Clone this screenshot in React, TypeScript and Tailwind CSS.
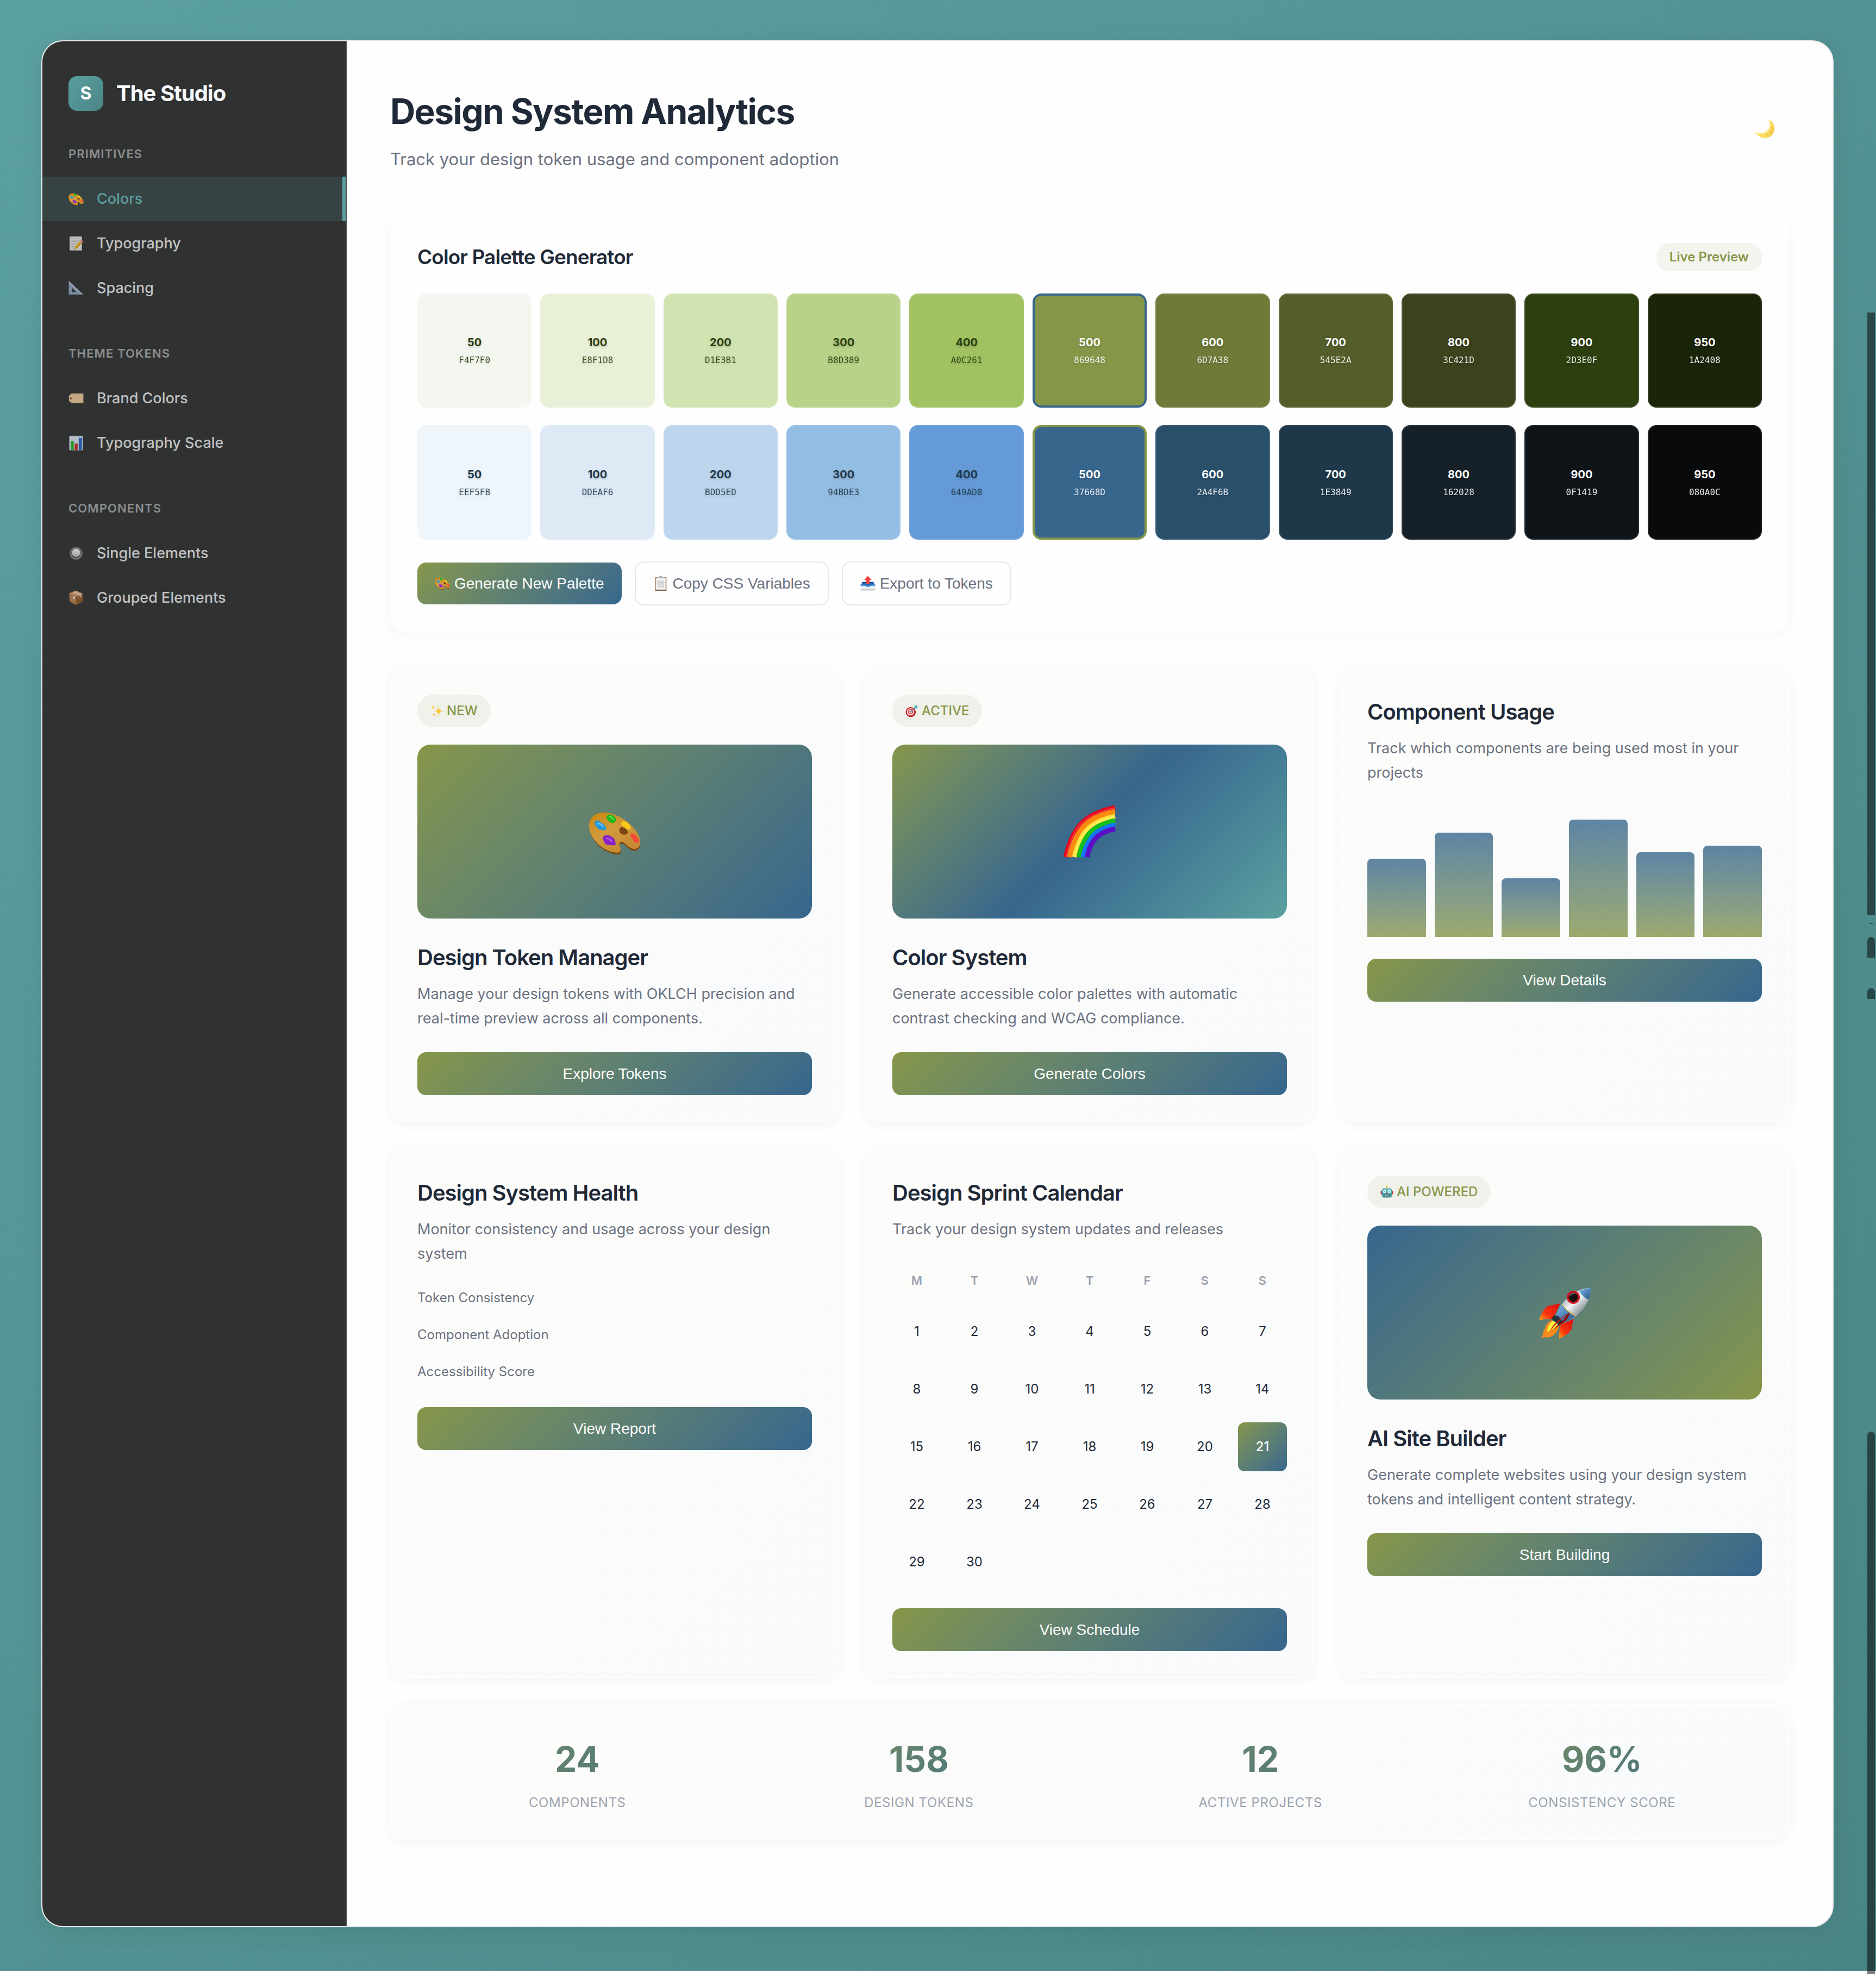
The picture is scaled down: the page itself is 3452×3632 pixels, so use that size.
import { useId } from "react";
import type { ReactNode } from "react";

type IconProps = { className?: string };

function Svg({ className, viewBox = "0 0 96 96", children }: IconProps & { viewBox?: string; children: ReactNode }) {
  return (
    <svg viewBox={viewBox} aria-hidden="true" className={className}>
      {children}
    </svg>
  );
}

function PaletteIcon({ className }: IconProps) {
  const id = useId();
  return (
    <Svg className={className} viewBox="0 -3 96 96">
      <defs>
        <linearGradient id={id} x1="0" y1="0" x2="0.6" y2="1">
          <stop offset="0" stopColor="#c8860d" />
          <stop offset="0.5" stopColor="#d29a3c" />
          <stop offset="1" stopColor="#c58a33" />
        </linearGradient>
      </defs>
      <path d="M28 13C10 13 1 25 2 40c2 23 27 46 52 47 8 0 5-8 3-14-2-6 5-8 9-4 6 6 11 11 19 11 7 0 11-7 10-15C92 42 58 13 28 13z" fill="#7a4510" />
      <path
        fillRule="evenodd"
        d="M28 10C9 10 0 22 1 37c2 23 27 46 52 47 8 0 6-8 4-14-2-6 4-8 9-4 6 6 11 11 19 11 7 0 11-7 10-15C92 39 58 10 28 10zm31 38c-4-4-3-10 2-11 5 0 10 4 11 8 1 6-8 8-13 3z"
        fill={`url(#${id})`}
      />
      <path d="M12 27c2-4 8-3 11 2 4 2 10 6 9 11-1 4-5 3-7 1-4 2-9-1-11-6-3-2-3-5-2-8z" fill="#1f9be0" />
      <path d="M16 31c4-2 9 2 11 5" stroke="#7fd0ff" strokeWidth="2" fill="none" />
      <path d="M34 16c2-4 9-3 13 1 5 3 4 11-1 12-6 1-9-3-11-6-2-2-3-4-1-7z" fill="#1fb51c" />
      <path d="M38 18c4-1 7 3 8 6" stroke="#74ec56" strokeWidth="2" fill="none" />
      <path d="M61 28c3-4 9-1 13 3 3 3 5 9 2 10-4 1-8-1-10-5-4-1-7-4-5-8z" fill="#f8c915" />
      <path d="M78 49c3-2 8 2 11 6 3 4 5 10 2 11-4 1-9-3-10-8-3-2-5-6-3-9z" fill="#f4483c" />
      <path d="M27 55c3-5 11-4 16 0 6 3 5 7 7 12 1 5-9 3-12 3-6 0-9-4-10-8-2-2-3-5-1-7z" fill="#8b22c4" />
      <path d="M32 58c5-1 9 2 11 6" stroke="#b86ae8" strokeWidth="2" fill="none" />
    </Svg>
  );
}

function MemoIcon({ className }: IconProps) {
  return (
    <Svg className={className}>
      <rect x="8" y="4" width="76" height="88" rx="2" fill="#e4e4e2" stroke="#a5a5a3" strokeWidth="3" />
      <g stroke="#9a9a9a" strokeWidth="3" strokeDasharray="9 3 5 2">
        <path d="M18 17h50M18 27h56M18 37h46M18 47h40M18 57h30M18 67h22M18 77h18" />
      </g>
      <path d="M74 32l14 9-38 40-17 7 5-18z" fill="#f2c022" />
      <path d="M81 36l7 5-38 40-8-5z" fill="#d99a12" />
      <path d="M74 32l6-6c6-1 11 4 10 9l-4 8z" fill="#ee7d86" />
      <path d="M70 36l14 10 3-4-13-10z" fill="#b9bcc0" />
      <path d="M38 70l-5 18 17-7z" fill="#ecd3a4" />
      <path d="M35 80l-2 8 7-3z" fill="#333333" />
    </Svg>
  );
}

function RulerIcon({ className }: IconProps) {
  return (
    <Svg className={className}>
      <path fillRule="evenodd" d="M2 3l92 88H2zM22 46v27h28z" fill="#8fa3bd" />
      <path d="M2 3l92 88h-8L2 12z" fill="#b9c8da" />
      <path d="M2 86h88l4 5H2z" fill="#65788f" />
      <path d="M22 46v27h28" fill="none" stroke="#5d6f86" strokeWidth="3" />
    </Svg>
  );
}

function TagIcon({ className }: IconProps) {
  return (
    <Svg className={className}>
      <path d="M20 17h74v62H20L3 64V32z" fill="#e9c698" />
      <path d="M94 75v4H20L3 64v-4l18 15z" fill="#b08a5c" />
      <circle cx="15" cy="48" r="7" fill="#a87f50" />
      <circle cx="15" cy="48" r="4" fill="#3b2a1c" />
    </Svg>
  );
}

function ChartIcon({ className }: IconProps) {
  return (
    <Svg className={className}>
      <rect x="6" y="4" width="84" height="89" fill="#dbe7f2" />
      <path d="M6 25h84M6 46h84M6 67h84M34 4v89M62 4v89" stroke="#b5c6d6" strokeWidth="2" />
      <rect x="14" y="36" width="19" height="57" fill="#28b22e" />
      <rect x="39" y="52" width="19" height="41" fill="#c9252b" />
      <rect x="65" y="16" width="19" height="77" fill="#1d62bd" />
      <rect x="6" y="4" width="84" height="89" fill="none" stroke="#8d9aa6" strokeWidth="3" />
    </Svg>
  );
}

function RadioIcon({ className }: IconProps) {
  const id = useId();
  return (
    <Svg className={className}>
      <defs>
        <linearGradient id={id} x1="0" y1="0" x2="0" y2="1">
          <stop offset="0" stopColor="#f7f7f7" />
          <stop offset="1" stopColor="#bdbdbd" />
        </linearGradient>
      </defs>
      <circle cx="48" cy="48" r="41" fill="#6a6b6b" />
      <circle cx="48" cy="49" r="37" fill="#858686" />
      <circle cx="48" cy="48" r="30" fill="#4b4c4c" />
      <circle cx="48" cy="45" r="26" fill={`url(#${id})`} />
    </Svg>
  );
}

function PackageIcon({ className }: IconProps) {
  return (
    <Svg className={className}>
      <path d="M48 2l44 19-43 20L4 20z" fill="#d39b6c" />
      <path d="M4 20l45 21v53L7 71z" fill="#b97c4c" />
      <path d="M92 21L49 41v53l40-22z" fill="#94602f" />
      <path d="M26 11l44 20 11-5-44-19z" fill="#ead5bd" />
      <path d="M70 31l11-5v14l-11 5z" fill="#d3bda4" />
      <path d="M28 37l13 6v14l-13-6z" fill="#f0ebe4" />
      <path d="M66 68l11-6v9l-11 6z" fill="#6f431d" />
    </Svg>
  );
}

function MoonIcon({ className }: IconProps) {
  const id = useId();
  return (
    <Svg className={className}>
      <defs>
        <linearGradient id={id} x1="0" y1="0.6" x2="1" y2="1">
          <stop offset="0" stopColor="#fdd95b" />
          <stop offset="0.6" stopColor="#fbdc63" />
          <stop offset="1" stopColor="#eebb33" />
        </linearGradient>
      </defs>
      <path d="M64 2c18 8 31 24 30 45-1 27-22 46-47 46C25 93 8 81 1 63c18 8 41 8 56-5 16-14 18-38 7-56z" fill={`url(#${id})`} />
      <path d="M66 6c10 18 8 40-7 54C44 73 22 75 5 67" fill="none" stroke="#fff0a6" strokeWidth="3" />
      <circle cx="74" cy="62" r="4" fill="#edc041" />
      <circle cx="56" cy="77" r="5" fill="#edc041" />
      <circle cx="80" cy="40" r="3" fill="#edc041" />
    </Svg>
  );
}

function ClipboardIcon({ className }: IconProps) {
  return (
    <Svg className={className}>
      <rect x="12" y="9" width="72" height="86" rx="5" fill="#b08d68" />
      <rect x="12" y="90" width="72" height="5" rx="2" fill="#6e5238" />
      <rect x="18" y="15" width="60" height="73" fill="#f6f6f6" />
      <rect x="26" y="30" width="44" height="48" fill="#dcdcdc" />
      <path d="M26 36h44M26 44h44M26 52h44M26 60h44M26 68h44" stroke="#c6c6c6" strokeWidth="2" />
      <path d="M28 18v-6c0-3 8-2 10-5 1-8 19-8 20 0 2 3 10 2 10 5v6z" fill="#bcc3cb" />
      <circle cx="48" cy="8" r="4" fill="#7c858f" />
    </Svg>
  );
}

function OutboxIcon({ className }: IconProps) {
  return (
    <Svg className={className}>
      <path d="M14 40h68l12 24H2z" fill="#2166b5" />
      <path d="M14 40h68l4 8H10z" fill="#164d8f" />
      <path d="M2 56h27c3 14 10 18 19 18s16-4 19-18h27v9l-1 2H3l-1-2z" fill="#2f8ae0" />
      <path d="M2 64h27c4 12 10 15 19 15s15-3 19-15h27v24c0 4-2 6-6 6H8c-4 0-6-2-6-6z" fill="#ebedf0" />
      <path d="M2 86h92v2c0 4-2 6-6 6H8c-4 0-6-2-6-6z" fill="#c9ced5" />
      <path d="M48 2l23 25H58v27H38V27H25z" fill="#f0413f" />
    </Svg>
  );
}

function SparklesIcon({ className }: IconProps) {
  return (
    <Svg className={className}>
      <path d="M60 12c3 26 8 33 32 38-24 5-29 12-32 40-3-28-8-35-32-40 24-5 29-12 32-38z" fill="#fbc93a" />
      <path d="M19 2c2 13 5 17 16 20-11 3-14 7-16 20-2-13-5-17-16-20 11-3 14-7 16-20z" fill="#fbd15a" />
      <path d="M27 60c1 11 4 14 14 16-10 3-13 6-14 18-2-12-4-15-14-18 10-2 12-5 14-16z" fill="#fbbf6a" />
    </Svg>
  );
}

function DartIcon({ className }: IconProps) {
  return (
    <Svg className={className}>
      <ellipse cx="40" cy="58" rx="36" ry="35" fill="#8d1420" />
      <ellipse cx="38" cy="55" rx="36" ry="35" fill="#d7262f" />
      <ellipse cx="38" cy="55" rx="27" ry="26" fill="#f5f0ee" />
      <ellipse cx="38" cy="55" rx="20" ry="19" fill="#d7262f" />
      <ellipse cx="38" cy="55" rx="13" ry="12" fill="#f5f0ee" />
      <ellipse cx="38" cy="55" rx="7" ry="6" fill="#d7262f" />
      <path d="M38 55l34-30" stroke="#397f8c" strokeWidth="5" />
      <path d="M64 30l4-17 13-10 2 11 11 3-12 13z" fill="#48b4c1" />
    </Svg>
  );
}

function RainbowIcon({ className }: IconProps) {
  const bands: [number, string][] = [
    [91, "#e3061b"],
    [84, "#fb8a10"],
    [75, "#ffdf35"],
    [67, "#14bf1c"],
    [59, "#1478f5"],
    [52, "#5a0fc4"],
  ];
  return (
    <Svg className={className}>
      {bands.map(([r, color]) => (
        <path key={r} d={`M${95 - r} 95Q${95 - r * 0.9} ${95 - r * 0.45} ${95 - r * 0.68} ${95 - r * 0.68}T95 ${95 - r}`} fill="none" stroke={color} strokeWidth="9" />
      ))}
      <path d="M5 95Q15 50 34 32T95 4" fill="none" stroke="#ff5560" strokeWidth="2" opacity="0.7" />
      <path d="M20 95Q28 60 44 44T95 20" fill="none" stroke="#fff36b" strokeWidth="3" opacity="0.8" />
    </Svg>
  );
}

function RobotIcon({ className }: IconProps) {
  return (
    <Svg className={className}>
      <rect x="44" y="6" width="8" height="18" fill="#f0a72a" />
      <circle cx="48" cy="8" r="7" fill="#f4c63a" />
      <rect x="2" y="42" width="12" height="24" rx="4" fill="#c8333a" />
      <rect x="82" y="42" width="12" height="24" rx="4" fill="#c8333a" />
      <path d="M26 22h44c12 0 16 8 16 20v30c0 12-6 18-16 18H26c-10 0-16-6-16-18V42c0-12 4-20 16-20z" fill="#4d9fa6" />
      <path d="M26 22h44c12 0 16 8 16 16H10c0-8 4-16 16-16z" fill="#78c3c6" />
      <circle cx="31" cy="46" r="11" fill="#e9fbff" />
      <circle cx="65" cy="46" r="11" fill="#e9fbff" />
      <circle cx="31" cy="46" r="5" fill="#2bbbe3" />
      <circle cx="65" cy="46" r="5" fill="#2bbbe3" />
      <path d="M48 52l6 10H42z" fill="#d23c42" />
      <rect x="26" y="68" width="44" height="13" rx="4" fill="#2d4c52" />
      <path d="M34 74h6M45 74h6M56 74h6" stroke="#e8eef0" strokeWidth="5" />
    </Svg>
  );
}

function RocketIcon({ className }: IconProps) {
  const id = useId();
  return (
    <Svg className={className}>
      <defs>
        <linearGradient id={`${id}b`} x1="0.2" y1="0.2" x2="0.8" y2="0.8">
          <stop offset="0" stopColor="#8fa0ac" />
          <stop offset="0.45" stopColor="#f2f3f4" />
          <stop offset="1" stopColor="#62707b" />
        </linearGradient>
        <linearGradient id={`${id}n`} x1="0" y1="0" x2="1" y2="1">
          <stop offset="0" stopColor="#7eb8ea" />
          <stop offset="1" stopColor="#245389" />
        </linearGradient>
        <linearGradient id={`${id}f`} x1="1" y1="0" x2="0" y2="1">
          <stop offset="0" stopColor="#d80f10" />
          <stop offset="0.65" stopColor="#f9340d" />
          <stop offset="1" stopColor="#ffa51e" />
        </linearGradient>
      </defs>
      <path d="M40 31L17 36C9 42 4 52 1 62c9-2 17-3 25-1z" fill={`url(#${id}f)`} />
      <path d="M64 60l-3 18c-5 8-13 14-23 18 0-12 0-19 4-27z" fill={`url(#${id}f)`} />
      <path d="M24 62c-8 4-12 12-13 18l-3 4 1 3-4 8 9-2 4 1c9-2 17-10 20-20z" fill="#f98a1c" />
      <path d="M27 63c-7 4-11 12-11 20 7-1 15-6 19-14z" fill="#ffee3f" />
      <path d="M96 3C72 2 42 22 32 55l14 12C76 57 97 28 96 3z" fill={`url(#${id}b)`} />
      <path d="M96 3C90 3 82 5 75 8c4 8 11 14 17 16 3-7 4-14 4-21z" fill={`url(#${id}n)`} />
      <path d="M43 32c-5 7-9 15-11 23l14 12c8-3 15-7 22-13C59 50 48 41 43 32z" fill={`url(#${id}n)`} />
      <path d="M43 32c5 9 16 18 25 22" fill="none" stroke="#ddb93c" strokeWidth="1.5" />
      <path d="M29 53l8 2 7 10-5 6-16-12z" fill="#273138" />
      <path d="M57 48c-10 8-24 18-37 36 6-14 18-25 37-36z" fill="#c31414" />
      <path d="M57 48c0 12-12 20-37 36 10-7 26-20 32-32z" fill="#8d0b0b" />
      <circle cx="64" cy="20" r="12" fill="#d41620" />
      <circle cx="64" cy="20" r="8.5" fill="#171113" />
      <path d="M58 18c1-4 5-6 9-5" stroke="#776c70" strokeWidth="2" fill="none" />
    </Svg>
  );
}

type Icon = (props: IconProps) => ReactNode;

const sections: { title: string; items: { label: string; icon: Icon; active?: boolean }[] }[] = [
  {
    title: "Primitives",
    items: [
      { label: "Colors", icon: PaletteIcon, active: true },
      { label: "Typography", icon: MemoIcon },
      { label: "Spacing", icon: RulerIcon },
    ],
  },
  {
    title: "Theme Tokens",
    items: [
      { label: "Brand Colors", icon: TagIcon },
      { label: "Typography Scale", icon: ChartIcon },
    ],
  },
  {
    title: "Components",
    items: [
      { label: "Single Elements", icon: RadioIcon },
      { label: "Grouped Elements", icon: PackageIcon },
    ],
  },
];

const steps = [50, 100, 200, 300, 400, 500, 600, 700, 800, 900, 950];
const green = ["F4F7F0", "E8F1D8", "D1E3B1", "B8D389", "A0C261", "869648", "6D7A38", "545E2A", "3C421D", "2D3E0F", "1A2408"];
const blue = ["EEF5FB", "DDEAF6", "BDD5ED", "94BDE3", "649AD8", "37668D", "2A4F6B", "1E3849", "162028", "0F1419", "080A0C"];

function Sidebar() {
  return (
    <aside className="w-[560px] shrink-0 border-r-2 border-[#4b4d4d] bg-[#303232] pt-16">
      <div className="mb-[62px] flex items-center gap-6 px-12">
        <div className="flex size-16 items-center justify-center rounded-2xl bg-linear-135 from-[#5b9fa0] to-[#4a8585] text-[32px] leading-none font-bold text-white">S</div>
        <span className="text-[40px] leading-[64px] font-bold tracking-tight text-[#f9fafb]">The Studio</span>
      </div>
      <nav>
        {sections.map((section) => (
          <div key={section.title} className="mb-[62px]">
            <h2 className="mb-6 px-12 text-[22px] leading-[35px] font-semibold tracking-wider text-[#8d8f8f] uppercase">{section.title}</h2>
            {section.items.map(({ label, icon: ItemIcon, active }) => (
              <a
                key={label}
                href="#"
                className={
                  active
                    ? "flex items-center gap-6 border-r-6 border-[#5b9fa0] bg-[#374342] px-12 py-5 text-[27px] leading-[42px] font-medium text-[#5b9fa0]"
                    : "flex items-center gap-6 px-12 py-5 text-[27px] leading-[42px] font-medium text-[#c1c2c2]"
                }
              >
                <ItemIcon className={active ? "size-7" : "size-7 opacity-80"} />
                {label}
              </a>
            ))}
          </div>
        ))}
      </nav>
    </aside>
  );
}

function SwatchRow({ name, colors, ink, ring }: { name: string; colors: string[]; ink: string; ring: string }) {
  return (
    <div className="grid grid-cols-11 gap-4">
      {colors.map((hex, i) => (
        <button
          key={hex}
          type="button"
          aria-label={`${name} ${steps[i]}, ${hex}`}
          className={`flex aspect-square flex-col items-center justify-center gap-1 rounded-2xl [text-shadow:0_2px_4px_rgba(0,0,0,0.2)] ${
            i < 5 ? ink : "text-white"
          } ${i === 5 ? ring : "border-2 border-white/10"}`}
          style={{ backgroundColor: `#${hex}` }}
        >
          <span className="text-[20px] leading-8 font-bold">{steps[i]}</span>
          <span className="font-['DejaVu_Sans_Mono',monospace] text-[16px] leading-[26px] opacity-90">{hex}</span>
        </button>
      ))}
    </div>
  );
}

function OutlineButton({ icon: ButtonIcon, children }: { icon: Icon; children: ReactNode }) {
  return (
    <button type="button" className="flex items-center gap-2 rounded-2xl border-2 border-[#e5e7eb] px-8 py-[22px] font-['Liberation_Sans',sans-serif] text-[28px] leading-[33px] text-[#6b7280]">
      <ButtonIcon className="size-7" />
      {children}
    </button>
  );
}

function PalettePanel() {
  return (
    <section className="mb-16 rounded-[32px] border-2 border-transparent p-12 shadow-[0_4px_24px_rgba(0,0,0,0.04)]">
      <div className="mb-10 flex h-[54px] items-center justify-between">
        <h2 className="text-[37px] leading-[54px] font-semibold tracking-tight text-[#1f2937]">Color Palette Generator</h2>
        <span className="rounded-[24px] bg-[#f3f4ee] px-6 text-[24px] leading-[52px] font-semibold text-[#869648]">Live Preview</span>
      </div>
      <div className="mb-10 flex flex-col gap-8">
        <SwatchRow name="Green" colors={green} ink="text-[#2d3e0f]" ring="border-4 border-[#37668d]" />
        <SwatchRow name="Blue" colors={blue} ink="text-[#1e3849]" ring="border-4 border-[#869648]" />
      </div>
      <div className="flex flex-wrap items-center gap-6">
        <button type="button" className="flex items-center gap-2 rounded-2xl bg-linear-135 from-[#869648] to-[#37668d] px-8 py-[22px] font-['Liberation_Sans',sans-serif] text-[28px] leading-[33px] text-white">
          <PaletteIcon className="size-7" />
          Generate New Palette
        </button>
        <OutlineButton icon={ClipboardIcon}>Copy CSS Variables</OutlineButton>
        <OutlineButton icon={OutboxIcon}>Export to Tokens</OutlineButton>
      </div>
    </section>
  );
}

const cardClass =
  "rounded-[32px] border-2 border-white/80 bg-linear-135 from-[#fcfcfa] via-[#fbfbfb] to-[#f8fafc] p-12 shadow-[0_4px_24px_rgba(0,0,0,0.05)]";

function Card({ title, text, action, badge, badgeIcon: BadgeIcon, hero, children }: {
  title: string;
  text: string;
  action: string;
  badge?: string;
  badgeIcon?: Icon;
  hero?: ReactNode;
  children?: ReactNode;
}) {
  return (
    <article className={cardClass}>
      {badge && BadgeIcon && (
        <span className="mb-8 flex w-fit items-center gap-1.5 rounded-[30px] bg-[#f0f1ea] px-6 text-[24px] leading-[60px] font-medium text-[#869648]">
          <BadgeIcon className="size-6" />
          {badge}
        </span>
      )}
      {hero}
      <h3 className="mb-3 text-[40px] leading-[64px] font-semibold tracking-tight text-[#1f2937]">{title}</h3>
      <p className="mb-10 text-[27px] leading-[45px] text-[#6b7280]">{text}</p>
      {children}
      <button type="button" className="block w-full rounded-2xl bg-linear-135 from-[#869648] to-[#37668d] py-6 font-['Liberation_Sans',sans-serif] text-[28px] leading-[31px] text-white">
        {action}
      </button>
    </article>
  );
}

function UsageChart() {
  const bars = [60, 80, 45, 90, 65, 70];
  return (
    <div className="mb-10 flex h-60 items-end gap-4" role="img" aria-label="Component usage">
      {bars.map((value, i) => (
        <div key={i} className="flex-1 rounded-t-lg bg-linear-to-t from-[#869648] to-[#37668d] opacity-80" style={{ height: `${value}%` }} />
      ))}
    </div>
  );
}

function HealthList() {
  return (
    <ul className="mb-[46px] flex flex-col gap-[30px] text-[24px] leading-[38px] text-[#6b7280]">
      <li>Token Consistency</li>
      <li>Component Adoption</li>
      <li>Accessibility Score</li>
    </ul>
  );
}

function Calendar() {
  const weeks = [0, 1, 2, 3, 4].map((w) => [1, 2, 3, 4, 5, 6, 7].map((d) => w * 7 + d).filter((d) => d <= 30));
  return (
    <table className="mb-10 block">
      <thead className="mb-4 block">
        <tr className="grid grid-cols-7 gap-4">
          {["M", "T", "W", "T", "F", "S", "S"].map((d, i) => (
            <th key={i} scope="col" className="text-[22px] leading-[65px] font-semibold text-[#9ca3af]">
              {d}
            </th>
          ))}
        </tr>
      </thead>
      <tbody className="flex flex-col gap-4">
        {weeks.map((week) => (
          <tr key={week[0]} className="grid grid-cols-7 gap-4">
            {week.map((d) => (
              <td
                key={d}
                className={
                  d === 21
                    ? "flex aspect-square items-center justify-center rounded-xl bg-linear-135 from-[#869648] to-[#37668d] text-[24px] font-medium text-white"
                    : "flex aspect-square items-center justify-center text-[24px] text-[#1f2937]"
                }
              >
                {d}
              </td>
            ))}
          </tr>
        ))}
      </tbody>
    </table>
  );
}

function Stats() {
  const stats = [
    ["24", "Components"],
    ["158", "Design Tokens"],
    ["12", "Active Projects"],
    ["96%", "Consistency Score"],
  ];
  return (
    <dl className={`mt-12 grid grid-cols-4 gap-10 text-center ${cardClass}`}>
      {stats.map(([value, label]) => (
        <div key={label} className="flex flex-col-reverse gap-2.5">
          <dt className="text-[24px] leading-[38px] tracking-wide text-[#9ca3af] uppercase">{label}</dt>
          <dd className="bg-linear-135 from-[#869648] to-[#37668d] bg-clip-text text-[64px] leading-[102px] font-bold text-transparent">{value}</dd>
        </div>
      ))}
    </dl>
  );
}

const heroClass = "mb-10 flex h-80 items-center justify-center rounded-3xl bg-linear-135";

export default function App() {
  return (
    <div className="relative min-h-screen bg-white font-['Inter',sans-serif]">
      <div className="bg-linear-135 from-[#5ba0a0] to-[#4a8585] pt-[74px] pr-[78px] pb-20 pl-[76px]">
        <div className="flex overflow-hidden rounded-[40px] border-2 border-[#e5e7eb] bg-[#fefefe] shadow-[0_8px_40px_rgba(0,0,0,0.08)]">
          <Sidebar />
          <main className="min-w-0 flex-1 px-20 pt-20 pb-[158px]">
            <header className="mb-[78px] flex items-center justify-between">
              <div>
                <h1 className="mb-3.5 text-[64px] leading-[98px] font-bold tracking-tight text-[#1f2937]">Design System Analytics</h1>
                <p className="text-[31px] leading-[50px] text-[#6b7280]">Track your design token usage and component adoption</p>
              </div>
              <button type="button" aria-label="Switch to dark mode" className="flex size-[88px] items-center justify-center">
                <MoonIcon className="size-9" />
              </button>
            </header>
            <PalettePanel />
            <div className="grid grid-cols-3 gap-12">
              <Card
                badge="NEW"
                badgeIcon={SparklesIcon}
                hero={
                  <div className={`${heroClass} from-[#869648] to-[#37668d]`}>
                    <PaletteIcon className="size-24" />
                  </div>
                }
                title="Design Token Manager"
                text="Manage your design tokens with OKLCH precision and real-time preview across all components."
                action="Explore Tokens"
              />
              <Card
                badge="ACTIVE"
                badgeIcon={DartIcon}
                hero={
                  <div className={`${heroClass} from-[#869648] via-[#37668d] to-[#5ba0a0]`}>
                    <RainbowIcon className="size-24" />
                  </div>
                }
                title="Color System"
                text="Generate accessible color palettes with automatic contrast checking and WCAG compliance."
                action="Generate Colors"
              />
              <Card title="Component Usage" text="Track which components are being used most in your projects" action="View Details">
                <UsageChart />
              </Card>
              <Card title="Design System Health" text="Monitor consistency and usage across your design system" action="View Report">
                <HealthList />
              </Card>
              <Card title="Design Sprint Calendar" text="Track your design system updates and releases" action="View Schedule">
                <Calendar />
              </Card>
              <Card
                badge="AI POWERED"
                badgeIcon={RobotIcon}
                hero={
                  <div className={`${heroClass} from-[#37668d] to-[#869648]`}>
                    <RocketIcon className="size-24" />
                  </div>
                }
                title="AI Site Builder"
                text="Generate complete websites using your design system tokens and intelligent content strategy."
                action="Start Building"
              />
            </div>
            <Stats />
          </main>
        </div>
      </div>
      <div aria-hidden="true">
        <div className="absolute top-[575px] right-0.5 h-[1109px] w-3.5 bg-black/50" />
        <div className="absolute top-[1699px] right-1.5 h-px w-1.5 bg-black/50" />
        <div className="absolute top-[1724px] right-0.5 h-[38px] w-3.5 rounded-t-full bg-black/50" />
        <div className="absolute top-[1818px] right-0.5 h-5 w-3.5 rounded-t-full bg-black/50" />
        <div className="absolute top-[2634px] right-0.5 bottom-0 w-3.5 rounded-t-full bg-black/50" />
      </div>
    </div>
  );
}
